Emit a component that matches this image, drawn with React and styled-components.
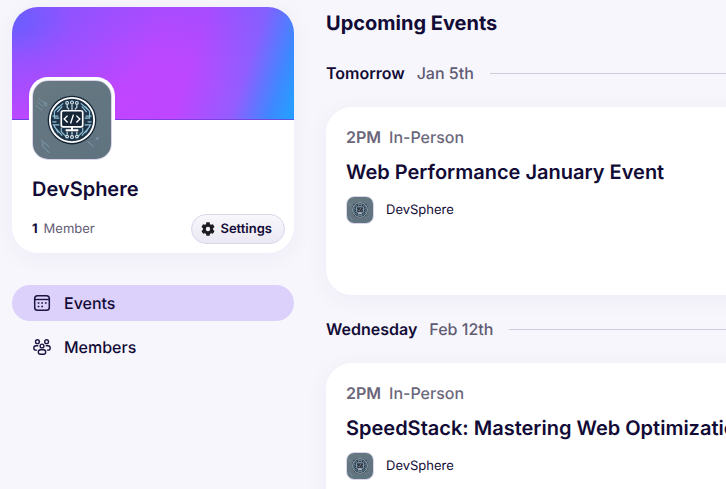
import React from 'react';
import styled, { createGlobalStyle } from 'styled-components';

const GlobalStyle = createGlobalStyle`
  * {
    box-sizing: border-box;
  }
  body {
    margin: 0;
    overflow-x: hidden;
    background: #f7f6fc;
    color: #110b36;
    font-family: Inter, 'Liberation Sans', sans-serif;
    font-size: 16px;
    line-height: 24px;
    text-rendering: geometricPrecision;
    -webkit-font-smoothing: antialiased;
  }
  h1, h2, h3, p {
    margin: 0;
  }
`;

const Page = styled.div`
  display: flex;
  align-items: flex-start;
  gap: 32px;
  min-height: 100vh;
  padding-left: 12px;
  overflow: hidden;
`;

const Sidebar = styled.aside`
  display: flex;
  flex-direction: column;
  flex: 0 0 282px;
  gap: 32px;
  padding-top: 7px;
`;

const Card = styled.section`
  background: #fff;
  border-radius: 26px;
  box-shadow: 0 4px 24px rgba(60, 45, 110, .05);
`;

const Cover = styled.div`
  height: 113px;
  border-radius: 26px 26px 0 0;
  border-bottom: 1px solid rgba(90, 50, 190, .5);
  background:
    radial-gradient(ellipse 150px 100px at 0 12%, rgba(92, 98, 255, .85), rgba(120, 90, 255, .5) 40%, rgba(150, 80, 255, 0)),
    linear-gradient(108deg, rgba(60, 140, 255, 0) 62%, rgba(80, 130, 255, .35) 80%, rgba(50, 143, 255, .9) 92%, #289dff 98%),
    radial-gradient(ellipse 350px 180px at 38% 86%, #c144ff 0%, #bb48ff 30%, #a44cff 62%, #8b54ff 100%);
`;

const Profile = styled.div`
  display: flex;
  flex-direction: column;
  padding: 0 9px 9px 20px;
`;

const Logo = styled.svg`
  display: block;
  flex: none;
  width: ${({ $size }) => $size}px;
  height: ${({ $size }) => $size}px;
  border-radius: ${({ $size }) => ($size > 40 ? 16 : 8)}px;
  border: 1px solid #d9d3ec;
`;

const Avatar = styled.div`
  align-self: flex-start;
  margin: -43px 0 0 -3px;
  padding: 3px;
  border-radius: 19px;
  background: #fff;
`;

const GroupName = styled.h1`
  margin-top: 14px;
  font-size: 20px;
  font-weight: 600;
  line-height: 24px;
`;

const Meta = styled.div`
  display: flex;
  align-items: center;
  justify-content: space-between;
  margin-top: 13px;
  font-size: 13px;
  line-height: 20px;
  color: #5f5b73;
`;

const MemberCount = styled.span`
  display: flex;
  gap: 6px;
  strong {
    font-weight: 700;
    color: #110b36;
  }
`;

const SettingsButton = styled.button`
  display: flex;
  align-items: center;
  gap: 4px;
  height: 30px;
  padding: 0 12px 0 8px;
  border: 1px solid #dbd7ea;
  border-radius: 15px;
  background: linear-gradient(#f8f7fb, #ebe8f4);
  color: #110b36;
  font: 600 13px/20px Inter, sans-serif;
  text-rendering: inherit;
  cursor: pointer;
`;

const Nav = styled.nav`
  display: flex;
  flex-direction: column;
  gap: 8px;
`;

const NavLink = styled.a`
  display: flex;
  align-items: center;
  gap: 12px;
  height: 36px;
  padding: 0 20px;
  border-radius: 18px;
  background: ${({ $active }) => ($active ? '#dcd1fb' : 'transparent')};
  color: #110b36;
  font-weight: 500;
  text-decoration: none;
`;

const Main = styled.main`
  flex: 1 0 640px;
  padding-top: 11px;
`;

const Heading = styled.h2`
  margin-bottom: 26px;
  font-size: 20px;
  font-weight: 700;
  line-height: 24px;
`;

const Day = styled.div`
  margin-bottom: 22px;
`;

const DayRow = styled.div`
  display: flex;
  align-items: center;
  gap: 12px;
  margin-bottom: 22px;
  font-weight: 500;
  color: #5f5b73;
  strong {
    font-weight: 600;
    color: #110b36;
  }
  &:after {
    content: '';
    flex: 1;
    height: 1px;
    margin-left: 4px;
    background: #cfccdc;
  }
`;

const EventCard = styled(Card)`
  min-height: 188px;
  padding: 18px 20px;
`;

const EventTime = styled.p`
  display: flex;
  gap: 8px;
  color: #6a667b;
  font-weight: 500;
  strong {
    font-weight: 600;
  }
`;

const EventTitle = styled.h3`
  margin: 9px 0 10px;
  font-size: 20px;
  font-weight: 600;
  line-height: 28px;
  white-space: nowrap;
`;

const Organizer = styled.div`
  display: flex;
  align-items: center;
  gap: 12px;
  font-size: 13px;
  line-height: 20px;
`;

const DevSphereLogo = ({ size }) => (
  <Logo $size={size} viewBox="0 0 80 80" role="img" aria-label="DevSphere logo">
    <defs>
      <linearGradient id={`slate${size}`} x1="0" y1="0" x2="1" y2="1">
        <stop offset="0" stopColor="#687982" />
        <stop offset="1" stopColor="#5f737f" />
      </linearGradient>
    </defs>
    <rect width="80" height="80" fill={`url(#slate${size})`} />
    {/* loose traces on the board */}
    <g fill="none" stroke="#8fb2cc" strokeWidth="1" opacity=".65">
      <path d="M4 21l6 5M6 18l5 4h2M3 25l6 5" strokeDasharray="2 1" />
      <circle cx="13" cy="24" r="1.3" />
      <path d="M8 60l9 8M10 63v4l7 7M56 62l6 5" />
      <circle cx="66" cy="59" r="1" />
    </g>
    <circle cx="40" cy="40" r="25" fill="#152536" />
    <circle cx="40" cy="40" r="22.7" fill="#203447" stroke="#fff" strokeWidth="1.9" />
    <g fill="none" stroke="#8fc1d8" strokeWidth="1.2">
      <path d="M27 26l-5 5v7h5M30 26l-5 6M24 42h-4M27 45h-6l5 8M29 48v4l5 5M22 47l8 9" />
      <path d="M53 26l5 5v7h-5M50 26l5 6M56 42h4M53 45h6l-5 8M51 48v4l-5 5M58 47l-8 9" />
      <path d="M31 23l-7 6M49 23l7 6M20 36h6M54 36h6" />
    </g>
    <g fill="none" stroke="#d9eff8" strokeWidth="1.1">
      <circle cx="35" cy="22.5" r="1.4" />
      <circle cx="40" cy="22" r="1.5" />
      <circle cx="45" cy="22.5" r="1.4" />
      <path d="M35 24v3l2 2M40 24v6M45 24v3l-2 2" />
      <circle cx="35" cy="57" r="1.4" />
      <circle cx="40" cy="57.5" r="1.5" />
      <circle cx="45" cy="57" r="1.4" />
      <path d="M35 55v-3M40 55v-3M45 55v-3" />
    </g>
    <rect x="29" y="30.5" width="22" height="16.5" rx="2" fill="#152536" stroke="#fff" strokeWidth="1.7" />
    <path d="M40 47v3M33.5 50.5h13" stroke="#fff" strokeWidth="2" />
    <path d="M35.5 35.5L32 39l3.5 3.5M44.5 35.5L48 39l-3.5 3.5M41.5 34.5l-3 9" fill="none" stroke="#fff" strokeWidth="1.4" />
  </Logo>
);

const GearIcon = () => (
  <svg width="16" height="16" viewBox="0 0 24 24" fill="#1d1c22" aria-hidden="true">
    <path
      fillRule="evenodd"
      d="M9.6 2h4.8l.6 2.9 1.6.9 2.8-.9 2.4 4.1-2.2 2v2l2.2 2-2.4 4.1-2.8-.9-1.6.9-.6 2.9H9.6l-.6-2.9-1.6-.9-2.8.9L2.2 15l2.2-2v-2l-2.2-2 2.4-4.1 2.8.9 1.6-.9zM12 8.7a3.3 3.3 0 1 0 0 6.6 3.3 3.3 0 0 0 0-6.6z"
    />
  </svg>
);

const CalendarIcon = () => (
  <svg width="20" height="20" viewBox="0 0 20 20" fill="none" stroke="#1c1442" aria-hidden="true">
    <rect x="2.7" y="2.7" width="14.6" height="14.6" rx="2.8" strokeWidth="1.5" />
    <path d="M3 6.5h14" strokeWidth="1.4" />
    <path d="M9.3 10H11M12.9 10h1.7M5.7 10h1.7M5.7 13.5h1.7M9.3 13.5H11" strokeWidth="1.7" />
  </svg>
);

const MembersIcon = () => (
  <svg width="20" height="20" viewBox="0 0 20 20" fill="none" stroke="#1c1442" strokeWidth="1.4" strokeLinecap="round" aria-hidden="true">
    <circle cx="5.4" cy="4.7" r="1.9" />
    <circle cx="14.6" cy="4.7" r="1.9" />
    <circle cx="10" cy="9" r="1.9" />
    <rect x="6.3" y="12.8" width="7.4" height="4.4" rx="2.2" />
    <path d="M5.8 8.7H4a2.2 2.2 0 0 0 0 4.4h.5M14.2 8.7H16a2.2 2.2 0 0 1 0 4.4h-.5" />
  </svg>
);

const events = [
  { day: 'Tomorrow', date: 'Jan 5th', time: '2PM', place: 'In-Person', title: 'Web Performance January Event' },
  { day: 'Wednesday', date: 'Feb 12th', time: '2PM', place: 'In-Person', title: 'SpeedStack: Mastering Web Optimization' },
];

const App = () => (
  <>
    <GlobalStyle />
    <Page>
      <Sidebar>
        <Card>
          <Cover />
          <Profile>
            <Avatar>
              <DevSphereLogo size={80} />
            </Avatar>
            <GroupName>DevSphere</GroupName>
            <Meta>
              <MemberCount><strong>1</strong> Member</MemberCount>
              <SettingsButton type="button">
                <GearIcon />
                Settings
              </SettingsButton>
            </Meta>
          </Profile>
        </Card>
        <Nav>
          <NavLink href="#events" $active>
            <CalendarIcon />
            Events
          </NavLink>
          <NavLink href="#members">
            <MembersIcon />
            Members
          </NavLink>
        </Nav>
      </Sidebar>
      <Main>
        <Heading>Upcoming Events</Heading>
        {events.map(({ day, date, time, place, title }) => (
          <Day key={title}>
            <DayRow>
              <strong>{day}</strong>
              <span>{date}</span>
            </DayRow>
            <EventCard>
              <EventTime>
                <strong>{time}</strong>
                <span>{place}</span>
              </EventTime>
              <EventTitle>{title}</EventTitle>
              <Organizer>
                <DevSphereLogo size={28} />
                DevSphere
              </Organizer>
            </EventCard>
          </Day>
        ))}
      </Main>
    </Page>
  </>
);

export default App;
